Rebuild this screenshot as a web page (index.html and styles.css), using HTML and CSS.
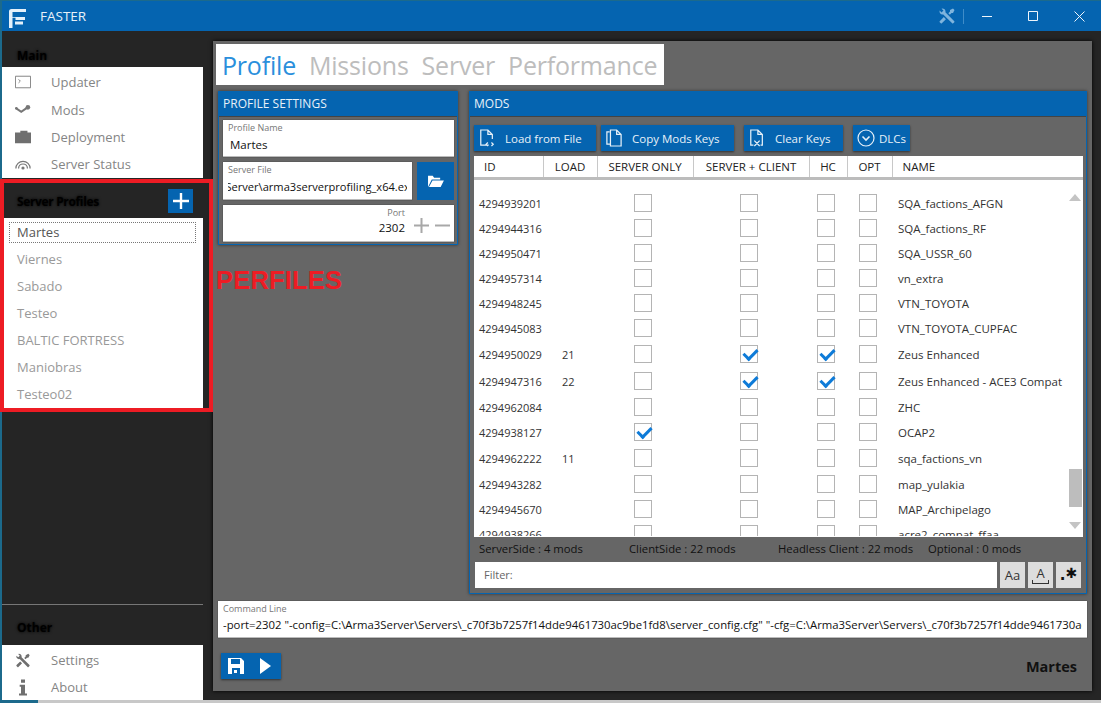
FILE: index.html
```html
<!DOCTYPE html>
<html lang="es">
<head>
    <meta charset="UTF-8">
    <title>FASTER</title>
    <link rel="stylesheet" href="styles.css">
</head>
<body>
<div class="window">
    <header class="titlebar">
        <svg class="logo" viewBox="0 0 17 19"><path d="M0 19V2.500Q0 0 2.500 0H17v3H3.500v5H16v3H6.500V8.800H3.500V19zM6 12.500h8v3H6V12.500z" fill="#e4f0fa"/></svg>
        <span class="app-name">FASTER</span>
        <svg class="tools" viewBox="0 0 24 24"><path d="M21.71 20.29L20.29 21.71A1 1 0 0 1 18.88 21.71L7 9.85A3.81 3.81 0 0 1 6 10A4 4 0 0 1 2.22 4.7L4.76 7.24L5.29 6.71L6.71 5.29L7.24 4.76L4.7 2.22A4 4 0 0 1 10 6A3.81 3.81 0 0 1 9.85 7L21.71 18.88A1 1 0 0 1 21.71 20.29M2.29 18.88A1 1 0 0 0 2.29 20.29L3.71 21.71A1 1 0 0 0 5.12 21.71L10.59 16.25L7.76 13.42M20 2L16 4V6L13.83 8.17L15.83 10.17L18 8H20L22 4Z"/></svg>
        <span class="title-sep"></span>
        <div class="win-btns">
            <svg class="w-min" viewBox="0 0 10 10"><path d="M0 5.500h10" /></svg>
            <svg class="w-max" viewBox="0 0 10 10"><path d="M.5.500h9v9h-9z" /></svg>
            <svg class="w-close" viewBox="0 0 11 11"><path d="M.5.500l10 10M10.500.500l-10 10" /></svg>
        </div>
    </header>

    <div class="content">
        <aside class="sidebar">
            <div class="side-label first">Main</div>
            <ul class="nav">
                <li><svg viewBox="0 0 18 14"><path d="M.5.500h17v13H.5z" fill="none" stroke="#777"/><path d="M4 4l2 2-2 2" fill="none" stroke="#777"/></svg>Updater</li>
                <li><svg viewBox="0 0 18 14"><path d="M1 5l6 4 6-4" fill="none" stroke="#777" stroke-width="2.4"/><circle cx="14.500" cy="4" r="2.600" fill="#777"/><circle cx="1.500" cy="5" r="1.500" fill="#777"/></svg>Mods</li>
                <li><svg viewBox="0 0 18 14"><path d="M0 2h18v12H0zM6 0h8v2H6z" fill="#6f6f6f"/></svg>Deployment</li>
                <li><svg viewBox="0 0 18 14"><path d="M1 12a8 8 0 0 1 16 0M4 12a5 5 0 0 1 10 0" fill="none" stroke="#777" stroke-width="1.4"/><circle cx="9" cy="11.500" r="1.800" fill="#777"/></svg>Server Status</li>
            </ul>
            <div class="side-label profiles-head">
                <span>Server Profiles</span>
                <button class="add-profile"><svg viewBox="0 0 16 16"><path d="M8 0v16M0 8h16" stroke="#fff" stroke-width="2.4"/></svg></button>
            </div>
            <ul class="profiles">
                <li class="selected">Martes</li>
                <li>Viernes</li>
                <li>Sabado</li>
                <li>Testeo</li>
                <li>BALTIC FORTRESS</li>
                <li>Maniobras</li>
                <li>Testeo02</li>
            </ul>
            <div class="side-spacer"></div>
            <div class="side-label other">Other</div>
            <ul class="nav bottom">
                <li><svg viewBox="0 0 24 24"><path fill="#6f6f6f" d="M21.71 20.29L20.29 21.71A1 1 0 0 1 18.88 21.71L7 9.85A3.81 3.81 0 0 1 6 10A4 4 0 0 1 2.22 4.7L4.76 7.24L5.29 6.71L6.71 5.29L7.24 4.76L4.7 2.22A4 4 0 0 1 10 6A3.81 3.81 0 0 1 9.85 7L21.71 18.88A1 1 0 0 1 21.71 20.29M2.29 18.88A1 1 0 0 0 2.29 20.29L3.71 21.71A1 1 0 0 0 5.12 21.71L10.59 16.25L7.76 13.42M20 2L16 4V6L13.83 8.17L15.83 10.17L18 8H20L22 4Z"/></svg>Settings</li>
                <li><svg viewBox="0 0 24 24"><path fill="#6f6f6f" d="M9 0h6v5H9zM7 8h8v13h3v3H6v-3h3V11H7z"/></svg>About</li>
            </ul>
            <div class="red-box"></div>
            <div class="red-label">PERFILES</div>
        </aside>

        <main class="main">
            <nav class="tabs">
                <span class="active">Profile</span>
                <span>Missions</span>
                <span>Server</span>
                <span>Performance</span>
            </nav>

            <div class="panels">
                <section class="panel profile-panel">
                    <h3>PROFILE SETTINGS</h3>
                    <div class="profile-body">
                        <div class="field">
                            <label>Profile Name</label>
                            <div class="value">Martes</div>
                        </div>
                        <div class="file-row">
                            <div class="field file-field">
                                <label>Server File</label>
                                <div class="value clip"><span>C:\Arma3Server\arma3serverprofiling_x64.exe</span></div>
                            </div>
                            <button class="browse"><svg viewBox="0 0 18 15"><path d="M1 14V2h5l1.500 2H14v2H5L1 14zM5.800 7H18l-3.500 7H2z" fill="#fff"/></svg></button>
                        </div>
                        <div class="field port-field">
                            <div class="port-text">
                                <label>Port</label>
                                <div class="value">2302</div>
                            </div>
                            <span class="stepper">
                                <svg viewBox="0 0 15 15"><path d="M7.500 0v15M0 7.500h15" stroke="#a8a8a8" stroke-width="2"/></svg>
                                <svg viewBox="0 0 15 15"><path d="M0 7.500h15" stroke="#a8a8a8" stroke-width="2"/></svg>
                            </span>
                        </div>
                    </div>
                </section>

                <section class="panel mods-panel">
                    <h3>MODS</h3>
                    <div class="mods-body">
                        <div class="toolbar">
                            <button class="tool load"><svg viewBox="0 0 18 20"><path d="M11 18H2V1h8l5 5v5M10 1v5h5M10 15l-2 2 2 2M14 15l2 2-2 2" fill="none" stroke="#e6f0f8" stroke-width="1.4"/></svg>Load from File</button>
                            <button class="tool copy"><svg viewBox="0 0 18 20"><path d="M4 3H1v14h4M5 1h7l5 5v13H5zM12 1v5h5" fill="none" stroke="#e6f0f8" stroke-width="1.4"/></svg>Copy Mods Keys</button>
                            <button class="tool clear"><svg viewBox="0 0 18 20"><path d="M5 18H2V1h8l5 5v12h-2M10 1v5h5M6 13l6 6M12 13l-6 6" fill="none" stroke="#e6f0f8" stroke-width="1.4"/></svg>Clear Keys</button>
                            <button class="tool dlc"><svg viewBox="0 0 18 18"><circle cx="9" cy="9" r="8" fill="none" stroke="#e6f0f8" stroke-width="1.2"/><path d="M5.500 7.500L9 11l3.500-3.500" fill="none" stroke="#e6f0f8" stroke-width="1.6"/></svg>DLCs</button>
                        </div>

                        <div class="grid">
                            <table class="grid-head">
                                <colgroup><col class="c-id"><col class="c-load"><col class="c-so"><col class="c-sc"><col class="c-hc"><col class="c-opt"><col></colgroup>
                                <tr><th class="left">ID</th><th>LOAD</th><th>SERVER ONLY</th><th>SERVER + CLIENT</th><th>HC</th><th>OPT</th><th class="name">NAME</th></tr>
                            </table>
                            <div class="grid-scroll">
                                <table class="grid-rows">
                                    <colgroup><col class="c-id"><col class="c-load"><col class="c-so"><col class="c-sc"><col class="c-hc"><col class="c-opt"><col></colgroup>
                                    <tr><td>4294939201</td><td></td><td><i class="cb"></i></td><td><i class="cb"></i></td><td><i class="cb"></i></td><td><i class="cb"></i></td><td>SQA_factions_AFGN</td></tr>
                                    <tr><td>4294944316</td><td></td><td><i class="cb"></i></td><td><i class="cb"></i></td><td><i class="cb"></i></td><td><i class="cb"></i></td><td>SQA_factions_RF</td></tr>
                                    <tr><td>4294950471</td><td></td><td><i class="cb"></i></td><td><i class="cb"></i></td><td><i class="cb"></i></td><td><i class="cb"></i></td><td>SQA_USSR_60</td></tr>
                                    <tr><td>4294957314</td><td></td><td><i class="cb"></i></td><td><i class="cb"></i></td><td><i class="cb"></i></td><td><i class="cb"></i></td><td>vn_extra</td></tr>
                                    <tr><td>4294948245</td><td></td><td><i class="cb"></i></td><td><i class="cb"></i></td><td><i class="cb"></i></td><td><i class="cb"></i></td><td>VTN_TOYOTA</td></tr>
                                    <tr><td>4294945083</td><td></td><td><i class="cb"></i></td><td><i class="cb"></i></td><td><i class="cb"></i></td><td><i class="cb"></i></td><td>VTN_TOYOTA_CUPFAC</td></tr>
                                    <tr class="has-load"><td>4294950029</td><td class="load-no">21</td><td><i class="cb"></i></td><td><i class="cb on"></i></td><td><i class="cb on"></i></td><td><i class="cb"></i></td><td>Zeus Enhanced</td></tr>
                                    <tr class="has-load"><td>4294947316</td><td class="load-no">22</td><td><i class="cb"></i></td><td><i class="cb on"></i></td><td><i class="cb on"></i></td><td><i class="cb"></i></td><td>Zeus Enhanced - ACE3 Compat</td></tr>
                                    <tr><td>4294962084</td><td></td><td><i class="cb"></i></td><td><i class="cb"></i></td><td><i class="cb"></i></td><td><i class="cb"></i></td><td>ZHC</td></tr>
                                    <tr><td>4294938127</td><td></td><td><i class="cb on"></i></td><td><i class="cb"></i></td><td><i class="cb"></i></td><td><i class="cb"></i></td><td>OCAP2</td></tr>
                                    <tr class="has-load"><td>4294962222</td><td class="load-no">11</td><td><i class="cb"></i></td><td><i class="cb"></i></td><td><i class="cb"></i></td><td><i class="cb"></i></td><td>sqa_factions_vn</td></tr>
                                    <tr><td>4294943282</td><td></td><td><i class="cb"></i></td><td><i class="cb"></i></td><td><i class="cb"></i></td><td><i class="cb"></i></td><td>map_yulakia</td></tr>
                                    <tr><td>4294945670</td><td></td><td><i class="cb"></i></td><td><i class="cb"></i></td><td><i class="cb"></i></td><td><i class="cb"></i></td><td>MAP_Archipelago</td></tr>
                                    <tr><td>4294938266</td><td></td><td><i class="cb"></i></td><td><i class="cb"></i></td><td><i class="cb"></i></td><td><i class="cb"></i></td><td>acre2_compat_ffaa</td></tr>
                                </table>
                                <div class="scrollbar">
                                    <span class="arrow up"></span>
                                    <span class="thumb"></span>
                                    <span class="arrow down"></span>
                                </div>
                            </div>
                        </div>

                        <div class="stats">
                            <span class="s1">ServerSide : 4 mods</span>
                            <span class="s2">ClientSide : 22 mods</span>
                            <span class="s3">Headless Client : 22 mods</span>
                            <span>Optional : 0 mods</span>
                        </div>

                        <div class="filter-row">
                            <div class="filter">Filter:</div>
                            <button class="opt">Aa</button>
                            <button class="opt"><span class="under">A</span></button>
                            <button class="opt regex"><span class="dot">.</span><span class="star">✱</span></button>
                        </div>
                    </div>
                </section>
            </div>

            <div class="cmd">
                <label>Command Line</label>
                <div class="value">-port=2302 "-config=C:\Arma3Server\Servers\_c70f3b7257f14dde9461730ac9be1fd8\server_config.cfg" "-cfg=C:\Arma3Server\Servers\_c70f3b7257f14dde9461730ac9be1fd8\basic.cfg"</div>
            </div>

            <div class="footer">
                <button class="run">
                    <svg viewBox="0 0 16 16"><path d="M0 0h13l3 3v13H0zM3 1v5h9V1zM4 10v6h8v-6zM6 12h3v3H6z" fill="#fff" fill-rule="evenodd"/></svg>
                    <svg viewBox="0 0 12 16"><path d="M1 0l11 8-11 8z" fill="#fff"/></svg>
                </button>
                <span class="current">Martes</span>
            </div>
        </main>
    </div>
</div>
<div class="strip"></div>
</body>
</html>
```

FILE: styles.css
```css
* {
    box-sizing: border-box;
}

html, body {
    height: 100%;
}

body {
    margin: 0;
    overflow: hidden;
    background-color: #1c6a8c;
    font-family: "Open Sans", "Noto Sans", sans-serif;
    font-size: 12px;
    color: #222;
}

button {
    font-family: inherit;
    border: none;
    padding: 0;
    cursor: pointer;
}

ul {
    list-style: none;
    margin: 0;
    padding: 0;
}

.window {
    margin: 1px 0 0 2px;
    height: 699px;
    display: flex;
    flex-direction: column;
    background-color: #252525;
}

.strip {
    height: 3px;
    margin-left: 38px;
    background-color: #c8c8c8;
}

/* title bar */
.titlebar {
    height: 30px;
    flex: none;
    display: flex;
    align-items: center;
    background-color: #0564b0;
    color: #e8f1f8;
}

.logo {
    width: 17px;
    height: 19px;
    margin: 4px 0 0 7px;
}

.app-name {
    margin-left: 14px;
    font-size: 13.5px;
}

.tools {
    width: 18px;
    height: 18px;
    margin-left: auto;
    fill: #7fb4dd;
}

.title-sep {
    width: 1px;
    height: 15px;
    margin: 0 18px 0 7px;
    background-color: #3f8cc8;
}

.win-btns {
    display: flex;
    align-items: center;
    gap: 36px;
    margin-right: 16px;
}

.win-btns svg {
    fill: none;
    stroke: #eef5fb;
}

.w-min, .w-max {
    width: 10px;
    height: 10px;
}

.w-close {
    width: 11px;
    height: 11px;
}

/* left side */
.content {
    flex: 1;
    display: flex;
    min-height: 0;
}

.sidebar {
    position: relative;
    width: 201px;
    flex: none;
    display: flex;
    flex-direction: column;
}

.side-label {
    color: #000;
    font-weight: 700;
    font-size: 12px;
    padding-left: 15px;
    text-shadow: 0 0 3px #000;
}

.side-label.first {
    height: 37px;
    padding-top: 16px;
}

.nav {
    background-color: #fff;
    padding: 1px 0;
}

.nav li {
    height: 27px;
    display: flex;
    align-items: center;
    color: #858585;
    font-size: 13px;
}

.nav li:first-child {
    height: 28px;
    padding-bottom: 1px;
}

.nav li svg {
    width: 16px;
    height: 14px;
    margin: 0 20px 0 13px;
    flex: none;
}

.nav.bottom {
    padding-bottom: 0;
}

.nav.bottom li {
    height: 26px;
}

.nav.bottom li:first-child {
    height: 28px;
    padding-bottom: 0;
}

.nav.bottom li svg {
    height: 17px;
}

.profiles-head {
    height: 40px;
    display: flex;
    align-items: center;
    justify-content: space-between;
    padding: 6px 10px 0 15px;
    letter-spacing: -0.35px;
}

.add-profile {
    width: 25px;
    height: 24px;
    display: flex;
    align-items: center;
    justify-content: center;
    background-color: #0564b0;
}

.add-profile svg {
    width: 16px;
    height: 16px;
}

.profiles {
    background-color: #fff;
    height: 190px;
    padding-top: 1px;
}

.profiles li {
    height: 27px;
    line-height: 27px;
    margin-left: 7px;
    width: 187px;
    padding-left: 8px;
    color: #999;
    font-size: 13px;
}

.profiles li.selected {
    height: 21px;
    line-height: 19px;
    margin: 3px 0 3px 7px;
    padding-left: 7px;
    border: 1px dotted #777;
    color: #555;
}

.side-spacer {
    flex: none;
    height: 197px;
    border-bottom: 1px solid #777;
}

.side-label.other {
    height: 41px;
    padding-top: 14px;
}

.red-box {
    position: absolute;
    left: -2px;
    top: 148px;
    width: 213px;
    height: 233px;
    border: 4px solid #ed1c24;
    pointer-events: none;
}

.red-label {
    position: absolute;
    left: 214px;
    top: 235px;
    z-index: 2;
    color: #ed1c24;
    font-size: 25.5px;
    font-weight: 700;
    font-family: "Liberation Sans", sans-serif;
    letter-spacing: 0.2px;
}

/* main panel */
.main {
    flex: none;
    width: 879px;
    height: 650px;
    margin: 10px 0 0 10px;
    padding: 3px 5px 0;
    background-color: #666;
    box-shadow: 0 0 4px #000;
}

.tabs {
    width: 448px;
    height: 41px;
    margin-left: -2px;
    display: flex;
    align-items: center;
    gap: 13px;
    padding-left: 6px;
    background-color: #fff;
    font-size: 25px;
    letter-spacing: -0.2px;
    color: #bdbdbd;
    white-space: nowrap;
}

.tabs .active {
    color: #2a8fdc;
}

.panels {
    display: flex;
    align-items: flex-start;
    gap: 11px;
    margin-top: 6px;
}

.panel {
    border: 1px solid #0564b0;
    box-shadow: 0 0 3px #333;
}

.panel h3 {
    margin: 0;
    height: 25px;
    line-height: 24px;
    padding-left: 4px;
    font-size: 12px;
    font-weight: 400;
    color: #e8f1f8;
    background-color: #0564b0;
    border-bottom: 1px solid #444;
}

.profile-panel {
    width: 240px;
    height: 154px;
}

.profile-body {
    padding: 3px 3px 0 4px;
    display: flex;
    flex-direction: column;
    gap: 5px;
}

.field, .cmd {
    background-color: #fff;
    border-bottom: 1px solid #bbb;
    box-shadow: 0 0 1px #333;
}

.field {
    height: 37px;
    padding: 2px 5px;
}

.field label, .cmd label {
    display: block;
    font-size: 9px;
    line-height: 12px;
    color: #777;
}

.field .value {
    font-size: 11.5px;
    line-height: 18px;
    padding-top: 2px;
    color: #111;
    padding-left: 2px;
    white-space: nowrap;
}

.file-row {
    display: flex;
    gap: 5px;
}

.file-field {
    width: 189px;
    height: 38px;
}

.clip {
    display: flex;
    justify-content: flex-end;
    overflow: hidden;
}

.clip span {
    margin-right: -9px;
    font-size: 11.1px;
}

.browse {
    width: 37px;
    height: 38px;
    background-color: #0564b0;
    display: flex;
    align-items: center;
    justify-content: center;
}

.browse svg {
    width: 17px;
    height: 14px;
}

.port-field {
    display: flex;
    justify-content: flex-end;
    padding-right: 4px;
}

.port-text {
    text-align: right;
}

.port-text .value {
    padding-top: 0;
}

.stepper {
    display: flex;
    align-items: center;
    gap: 6px;
    margin: 4px 0 0 9px;
}

.stepper svg {
    width: 15px;
    height: 15px;
}

.mods-panel {
    width: 618px;
    height: 503px;
}

.mods-body {
    padding: 8px 3px 0 4px;
}

.toolbar {
    display: flex;
    height: 26px;
    margin-bottom: 5px;
}

.tool {
    height: 26px;
    display: flex;
    align-items: center;
    background-color: #0564b0;
    color: #e8f1f8;
    font-size: 11.5px;
    white-space: nowrap;
    box-shadow: 0 1px 2px #333;
}

.tool svg {
    width: 16px;
    height: 18px;
    margin: 0 10px 0 5px;
    flex: none;
}

.tool.load {
    width: 122px;
    margin-right: 5px;
}

.tool.copy {
    width: 133px;
    margin-right: 10px;
}

.tool.clear {
    width: 99px;
    margin-right: 10px;
}

.tool.dlc {
    width: 57px;
}

.tool.dlc svg {
    width: 18px;
    height: 18px;
    margin: 0 4px;
}

/* mods grid */
.grid {
    height: 381px;
    width: 609px;
    display: flex;
    flex-direction: column;
    background-color: #fff;
}

.grid table {
    border-collapse: collapse;
    table-layout: fixed;
    width: 609px;
    flex: none;
}

.c-id { width: 69px; }
.c-load { width: 54px; }
.c-so { width: 96px; }
.c-sc { width: 116px; }
.c-hc { width: 38px; }
.c-opt { width: 45px; }

.grid-head {
    border-bottom: 3px solid #bcbcbc;
}

.grid-head th {
    height: 22px;
    padding: 0;
    font-weight: 400;
    font-size: 11.5px;
    color: #222;
    border-right: 1px solid #c8c8c8;
    white-space: nowrap;
}

.grid-head th.left {
    text-align: left;
    padding-left: 10px;
}

.grid-head th.name {
    text-align: left;
    padding-left: 10px;
    border-right: none;
}

.grid-scroll {
    position: relative;
    height: 356px;
    padding-top: 11px;
    overflow: hidden;
}

.grid-rows td {
    height: 25px;
    padding: 0;
    font-size: 11.5px;
    color: #333;
    text-align: center;
    white-space: nowrap;
    overflow: hidden;
}

.grid-rows td:first-child {
    text-align: left;
    padding-left: 5px;
    font-size: 11px;
}

.grid-rows td:last-child {
    text-align: left;
    padding-left: 6px;
}

.grid-rows .has-load td {
    height: 27px;
}

.grid-rows td.load-no {
    text-align: left;
    padding-left: 19px;
    font-size: 11px;
}

.cb {
    display: block;
    width: 18px;
    height: 18px;
    margin: 0 auto;
    position: relative;
    left: -2px;
    border: 1px solid #b4b4b4;
    background-color: #fff;
}

.cb.on::after {
    content: "";
    position: absolute;
    left: 5px;
    top: 0;
    width: 6px;
    height: 11px;
    border: solid #0e7bd8;
    border-width: 0 3px 3px 0;
    transform: rotate(45deg);
}

.scrollbar {
    position: absolute;
    right: 1px;
    top: 0;
    bottom: 0;
    width: 14px;
    display: flex;
    flex-direction: column;
    align-items: center;
    padding: 14px 0 7px;
    background-color: #fff;
}

.arrow {
    width: 0;
    height: 0;
    border-left: 6px solid transparent;
    border-right: 6px solid transparent;
}

.arrow.up {
    border-bottom: 7px solid #c4c4c4;
}

.arrow.down {
    border-top: 7px solid #c4c4c4;
}

.thumb {
    width: 13px;
    height: 38px;
    margin-top: auto;
    margin-bottom: 15px;
    background-color: #bdbdbd;
}

.stats {
    height: 25px;
    display: flex;
    align-items: center;
    padding: 0 0 2px 5px;
    font-size: 11.3px;
    color: #111;
    white-space: nowrap;
}

.s1 { width: 150px; }
.s2 { width: 149px; }
.s3 { width: 150px; }

.filter-row {
    display: flex;
    height: 26px;
}

.filter {
    width: 522px;
    margin-left: 1px;
    margin-right: 3px;
    padding-left: 9px;
    line-height: 25px;
    font-size: 11px;
    color: #666;
    background-color: #fff;
}

.opt {
    width: 25px;
    height: 26px;
    margin-right: 3px;
    background-color: #ddd;
    color: #333;
    font-size: 13px;
    display: flex;
    align-items: center;
    justify-content: center;
}

.under {
    display: block;
    width: 17px;
    line-height: 14px;
    text-align: center;
}

.under::after {
    content: "";
    display: block;
    height: 3px;
    border: solid #333;
    border-width: 0 1px 1px;
}

.regex {
    margin-right: 0;
    color: #111;
    align-items: flex-start;
    font-family: "DejaVu Sans", sans-serif;
    font-weight: 700;
}

.dot {
    font-size: 15px;
    line-height: 20px;
    margin-top: 3px;
}

.star {
    font-size: 14px;
    line-height: 20px;
    margin-top: 1px;
}

/* bottom */
.cmd {
    width: 869px;
    height: 37px;
    margin-top: 7px;
    padding: 2px 5px;
    overflow: hidden;
}

.cmd .value {
    font-size: 11.33px;
    line-height: 19px;
    color: #111;
    white-space: nowrap;
    overflow: hidden;
}

.footer {
    display: flex;
    align-items: center;
    justify-content: space-between;
    margin-top: 15px;
    padding: 0 10px 0 3px;
}

.run {
    width: 60px;
    height: 26px;
    display: flex;
    align-items: center;
    gap: 15px;
    padding-left: 7px;
    background-color: #0564b0;
    box-shadow: 0 1px 2px #333;
}

.run svg {
    width: 16px;
    height: 16px;
}

.run svg:last-child {
    width: 12px;
}

.current {
    font-size: 14.5px;
    font-weight: 700;
    color: #111;
}
```
